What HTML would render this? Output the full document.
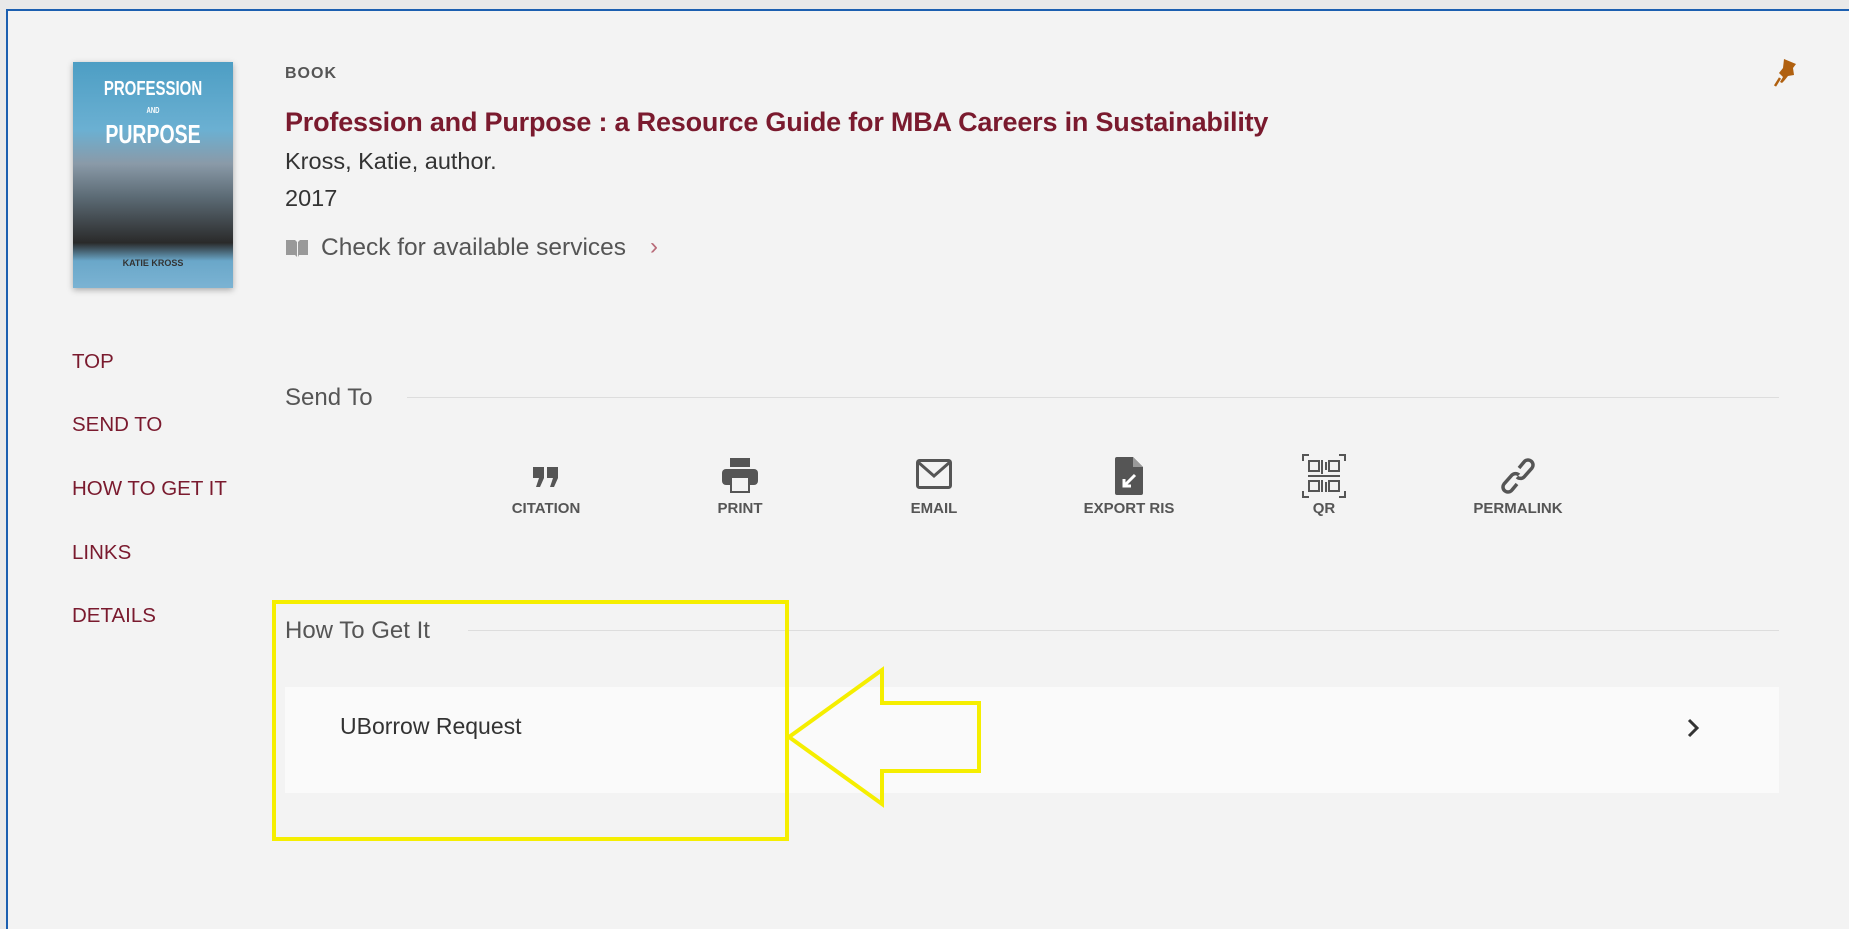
<!DOCTYPE html>
<html><head><meta charset="utf-8"><style>
*{margin:0;padding:0;box-sizing:border-box}
body{width:1849px;height:920px;background:#e9e9e9;font-family:"Liberation Sans",sans-serif;position:relative;overflow:hidden}
.card{position:absolute;left:6px;top:9px;width:1850px;height:920px;background:#f3f3f3;border-left:2px solid #1c5fb0;border-top:2px solid #1c5fb0}
.a{position:absolute;white-space:nowrap}
.nav{color:#7a1a2e;font-size:20.5px;left:72px}
.lbl{font-size:15px;color:#555;font-weight:bold;transform:translateX(-50%);top:500px}
.ic{position:absolute;transform:translateX(-50%);top:457px}
</style></head><body>
<div class="card"></div>
<div class="a" style="left:73px;top:62px;width:160px;height:226px;background:linear-gradient(#4d9ec4 0%,#6bb0d2 30%,#8a9aa8 45%,#5b6a74 60%,#2a2a2a 80%,#6aa7c9 88%,#7bb3d3 100%);box-shadow:0 2px 6px rgba(0,0,0,.3)">
<div style="color:#fff;font-size:20px;font-weight:bold;text-align:center;margin-top:18px;line-height:18px;transform:scaleX(.75)">PROFESSION<br><span style="font-size:8px">AND</span><br><span style="font-size:26px;line-height:28px">PURPOSE</span></div>
<div style="position:absolute;bottom:20px;width:100%;text-align:center;font-size:9px;color:#333;font-weight:bold">KATIE KROSS</div></div>
<div class="a" style="left:285px;top:65px;font-size:16px;color:#555;font-weight:bold;letter-spacing:1px">BOOK</div>
<div class="a" style="left:285px;top:107px;font-size:27px;color:#7a1a2e;font-weight:bold;letter-spacing:-0.2px">Profession and Purpose : a Resource Guide for MBA Careers in Sustainability</div>
<div class="a" style="left:285px;top:148px;font-size:23.5px;color:#333">Kross, Katie, author.</div>
<div class="a" style="left:285px;top:185px;font-size:23.5px;color:#333">2017</div>
<svg class="a" style="left:285px;top:237px" width="24" height="22" viewBox="0 0 24 22"><path d="M1 3h9l2 2v15l-2-2H1z M13 5l2-2h8v15h-9l-1 2z" fill="#999"/></svg>
<div class="a" style="left:321px;top:234px;font-size:24.5px;color:#555">Check for available services</div>
<div class="a" style="left:650px;top:233px;font-size:24px;color:#b86a78">›</div>
<svg class="a" style="left:1771px;top:55px" width="28" height="32" viewBox="0 0 28 32"><path d="M13 4l12 5-3 4 1 7-6 1-4 5-2 2-2-1 3-5-4-4 4-5z" fill="#b0600f"/><path d="M9 23l-5 8" stroke="#b0600f" stroke-width="2.5"/></svg>
<div class="a nav" style="top:350px">TOP</div>
<div class="a nav" style="top:413px">SEND TO</div>
<div class="a nav" style="top:477px">HOW TO GET IT</div>
<div class="a nav" style="top:541px">LINKS</div>
<div class="a nav" style="top:604px">DETAILS</div>
<div class="a" style="left:285px;top:384px;font-size:24px;color:#555">Send To</div>
<div class="a" style="left:407px;top:397px;width:1372px;height:1px;background:#ddd"></div>
<svg class="ic" style="left:546px;top:466px" width="28" height="22" viewBox="0 0 28 22"><path d="M1 1h11v11l-4 9H4l3-9H1z M15 1h11v11l-4 9h-4l3-9h-6z" fill="#555"/></svg>
<svg class="ic" style="left:740px" width="38" height="36" viewBox="0 0 38 36"><rect x="9" y="1" width="20" height="9" fill="#555"/><rect x="1" y="12" width="36" height="16" rx="4" fill="#555"/><rect x="10" y="20" width="18" height="15" fill="#f3f3f3" stroke="#555" stroke-width="2"/></svg>
<svg class="ic" style="left:934px;top:459px" width="36" height="30" viewBox="0 0 36 30"><rect x="1.5" y="1.5" width="33" height="27" rx="2" fill="none" stroke="#555" stroke-width="3"/><path d="M2 3l16 14L34 3" fill="none" stroke="#555" stroke-width="3"/></svg>
<svg class="ic" style="left:1129px" width="28" height="38" viewBox="0 0 28 38"><path d="M2 0h16l10 10v26a2 2 0 0 1-2 2H2a2 2 0 0 1-2-2V2a2 2 0 0 1 2-2z" fill="#555"/><path d="M18 0v10h10" fill="#999"/><path d="M20 18L9 29M9 22v7h7" stroke="#fff" stroke-width="3" fill="none"/></svg>
<svg class="ic" style="left:1324px;top:454px" width="44" height="44" viewBox="0 0 44 44" fill="none" stroke="#555" stroke-width="2"><path d="M1 7V1h6M37 1h6v6M43 37v6h-6M7 43H1v-6"/><rect x="7" y="7" width="10" height="10"/><rect x="27" y="7" width="10" height="10"/><rect x="7" y="27" width="10" height="10"/><rect x="27" y="27" width="10" height="10"/><path d="M20 6v14M24 8v8M6 22h32M20 26v12M24 28v10"/></svg>
<svg class="ic" style="left:1518px;top:458px" width="34" height="36" viewBox="0 0 34 36" fill="none" stroke="#555" stroke-width="3.5"><path d="M18 10l5-6a5 5 0 0 1 8 6l-8 9a5 5 0 0 1-7 0"/><path d="M16 26l-5 6a5 5 0 0 1-8-6l8-9a5 5 0 0 1 7 0"/></svg>
<div class="a lbl" style="left:546px">CITATION</div>
<div class="a lbl" style="left:740px">PRINT</div>
<div class="a lbl" style="left:934px">EMAIL</div>
<div class="a lbl" style="left:1129px">EXPORT RIS</div>
<div class="a lbl" style="left:1324px">QR</div>
<div class="a lbl" style="left:1518px">PERMALINK</div>
<div class="a" style="left:285px;top:617px;font-size:24px;color:#555">How To Get It</div>
<div class="a" style="left:468px;top:630px;width:1311px;height:1px;background:#ddd"></div>
<div class="a" style="left:285px;top:687px;width:1494px;height:106px;background:#fafafa"></div>
<div class="a" style="left:340px;top:713px;font-size:23px;color:#333">UBorrow Request</div>
<svg class="a" style="left:1686px;top:717px" width="14" height="22" viewBox="0 0 14 22"><path d="M3 3l8 8-8 8" stroke="#333" stroke-width="3" fill="none"/></svg>
<div class="a" style="left:272px;top:600px;width:517px;height:241px;border:4px solid #f5ee00"></div>
<svg class="a" style="left:0;top:0" width="1849" height="920"><polygon points="789,737 882,670 882,703 979,703 979,771 882,771 882,804" fill="none" stroke="#f5ee00" stroke-width="4"/></svg>
</body></html>
